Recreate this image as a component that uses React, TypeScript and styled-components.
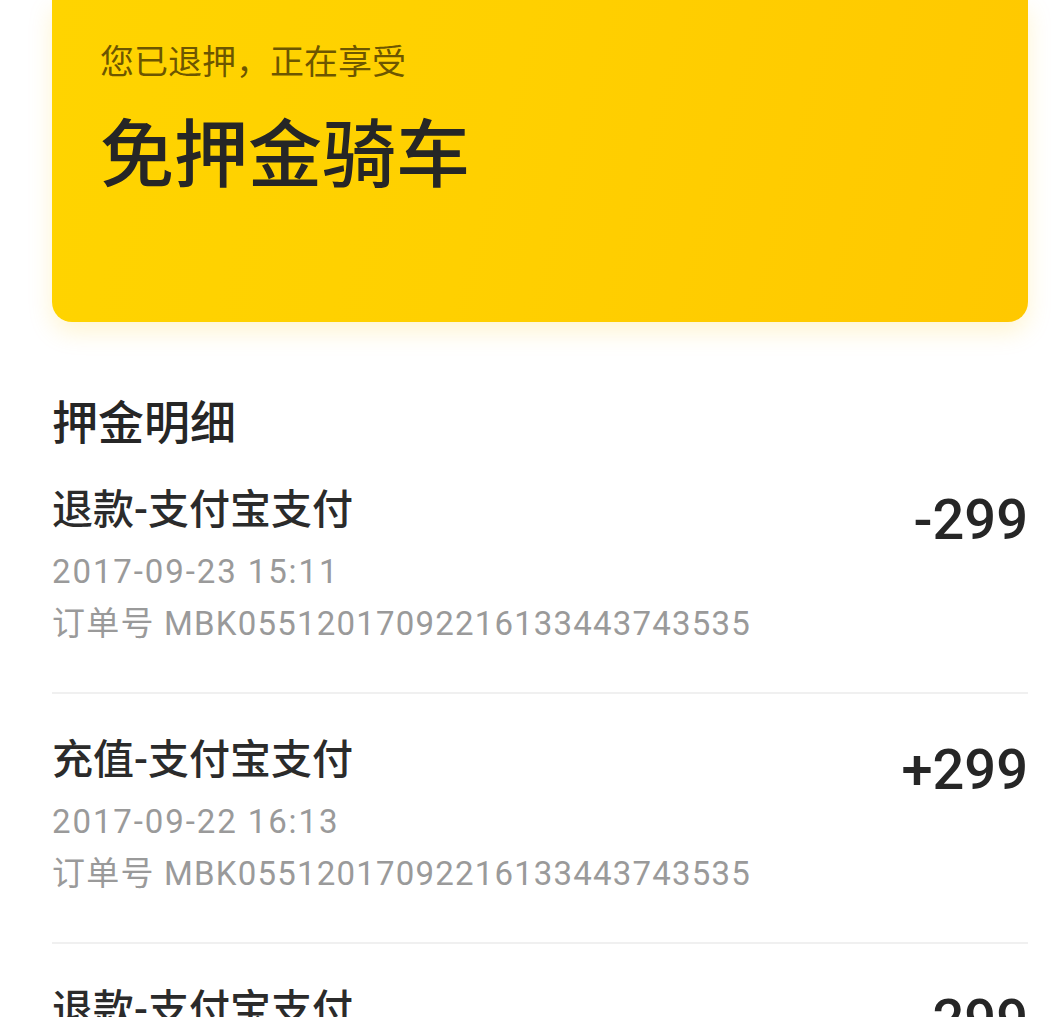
import React from 'react';
import styled, { createGlobalStyle } from 'styled-components';

const records = [
  { title: '退款-支付宝支付', amount: '-299', date: '2017-09-23 15:11', order: 'MBK05512017092216133443743535' },
  { title: '充值-支付宝支付', amount: '+299', date: '2017-09-22 16:13', order: 'MBK05512017092216133443743535' },
  { title: '退款-支付宝支付', amount: '-299', date: '2017-09-21 10:02', order: 'MBK05512017092216133443743535' },
];

const App = () => {
  return (
    <Page>
      <GlobalStyle />
      <Card>
        <CardHint>您已退押，正在享受</CardHint>
        <CardTitle>免押金骑车</CardTitle>
      </Card>
      <Section>
        <SectionTitle>押金明细</SectionTitle>
        {records.map((r, i) => (
          <Row key={i}>
            <RowMain>
              <RowTitle>{r.title}</RowTitle>
              <RowMeta $first $spacing={1.9}>{r.date}</RowMeta>
              <RowMeta $spacing={1.2}>订单号 {r.order}</RowMeta>
            </RowMain>
            <Amount>{r.amount}</Amount>
          </Row>
        ))}
      </Section>
    </Page>
  );
};

export default App;

const GlobalStyle = createGlobalStyle`
  html, body {
    margin: 0;
    padding: 0;
    background: #ffffff;
  }
  body {
    font-family: Roboto, "Noto Sans CJK SC", sans-serif;
    color: #333333;
  }
`;

const Page = styled.div`
  width: 1051px;
  height: 1017px;
  overflow: hidden;
  padding: 0 23px 0 52px;
  box-sizing: border-box;
`;

const Card = styled.div`
  height: 322px;
  box-sizing: border-box;
  padding: 38px 48px 0 48px;
  border-radius: 0 0 20px 20px;
  background: linear-gradient(105deg, #ffd400 0%, #ffd000 45%, #ffc800 100%);
  box-shadow: 0 10px 24px rgba(255, 200, 0, 0.18);
`;

const CardHint = styled.div`
  font-family: "Noto Sans CJK SC", sans-serif;
  font-size: 34px;
  line-height: 44px;
  color: rgba(60, 45, 0, 0.75);
`;

const CardTitle = styled.div`
  margin-top: 22px;
  font-family: "Noto Sans CJK SC", sans-serif;
  font-size: 74px;
  line-height: 90px;
  font-weight: 500;
  color: #262626;
`;

const Section = styled.div`
  margin-top: 72px;
`;

const SectionTitle = styled.div`
  font-family: "Noto Sans CJK SC", sans-serif;
  font-size: 46px;
  line-height: 50px;
  font-weight: 500;
  color: #262626;
`;

const Row = styled.div`
  display: flex;
  justify-content: space-between;
  align-items: flex-start;
  padding: 40px 0 42px 0;
  border-bottom: 2px solid #f0f0f0;
`;

const RowMain = styled.div`
  display: flex;
  flex-direction: column;
`;

const RowTitle = styled.div`
  font-size: 41px;
  line-height: 52px;
  font-weight: 500;
  color: #2b2b2b;
`;

const RowMeta = styled.div<{ $first?: boolean; $spacing: number }>`
  margin-top: ${(p) => (p.$first ? '10px' : '0')};
  font-size: 33px;
  line-height: 52px;
  letter-spacing: ${(p) => p.$spacing}px;
  color: #9a9a9a;
`;

const Amount = styled.div`
  font-size: 56px;
  line-height: 72px;
  font-weight: 500;
  color: #262626;
`;
